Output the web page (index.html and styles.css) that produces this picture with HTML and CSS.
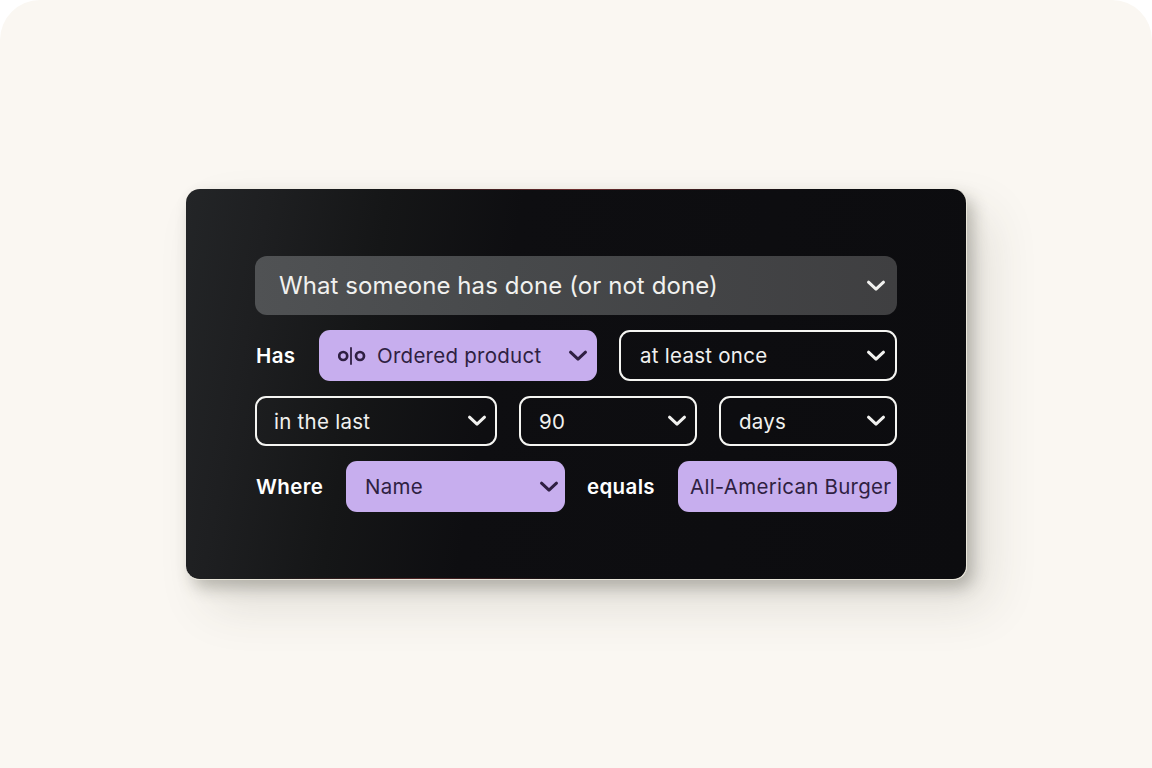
FILE: index.html
```html
<!DOCTYPE html>
<html lang="en">
<head>
    <meta charset="UTF-8">
    <title>Segment conditions</title>
    <link rel="stylesheet" href="styles.css">
</head>
<body>
    <svg class="icon-defs" width="0" height="0">
        <symbol id="chevron" viewBox="0 0 20 12">
            <path d="M2.5 2.2 L10 9.2 L17.5 2.2" fill="none" stroke="currentColor" stroke-width="3" stroke-linecap="round" stroke-linejoin="round"/>
        </symbol>
    </svg>

    <div class="stage">
        <div class="card">
            <div class="select select-wide">
                <span>What someone has done (or not done)</span>
                <svg class="chevron"><use href="#chevron"/></svg>
            </div>

            <div class="row">
                <span class="label label-has">Has</span>
                <div class="select select-purple select-product">
                    <!-- metric icon -->
                    <svg class="metric-icon" viewBox="0 0 28 18">
                        <circle cx="5.2" cy="9" r="4" fill="none" stroke="currentColor" stroke-width="2.7"/>
                        <path d="M13 1 V17" stroke="currentColor" stroke-width="1.8" stroke-linecap="round"/>
                        <circle cx="22" cy="9" r="4" fill="none" stroke="currentColor" stroke-width="2.7"/>
                    </svg>
                    <span>Ordered product</span>
                    <svg class="chevron"><use href="#chevron"/></svg>
                </div>
                <div class="select select-outline select-once">
                    <span>at least once</span>
                    <svg class="chevron"><use href="#chevron"/></svg>
                </div>
            </div>

            <div class="row row-short">
                <div class="select select-outline select-last">
                    <span>in the last</span>
                    <svg class="chevron"><use href="#chevron"/></svg>
                </div>
                <div class="select select-outline select-num">
                    <span>90</span>
                    <svg class="chevron"><use href="#chevron"/></svg>
                </div>
                <div class="select select-outline select-days">
                    <span>days</span>
                    <svg class="chevron"><use href="#chevron"/></svg>
                </div>
            </div>

            <div class="row">
                <span class="label label-where">Where</span>
                <div class="select select-purple select-name">
                    <span>Name</span>
                    <svg class="chevron"><use href="#chevron"/></svg>
                </div>
                <span class="label label-equals">equals</span>
                <div class="select select-purple select-value">
                    <span>All-American Burger</span>
                </div>
            </div>
        </div>
    </div>
</body>
</html>
```

FILE: styles.css
```css
* {
    margin: 0;
    padding: 0;
    box-sizing: border-box;
    font-family: 'Inter', 'Liberation Sans', sans-serif;
}

:root {
    --purple: #c7aeee;
    --purple-text: #2f1f42;
    --text-color: #f1f1ef;
}

body {
    background-color: #ffffff;
    width: 1152px;
    height: 768px;
    overflow: hidden;
}

.icon-defs {
    display: block;
}

.stage {
    height: 768px;
    padding: 189px 185px 0 186px;
    background-color: #faf7f2;
    border-radius: 40px 40px 0 0;
}

.card {
    height: 391px;
    padding: 67px 69px 0 69px;
    display: flex;
    flex-direction: column;
    gap: 15px;
    color: var(--text-color);
    border-radius: 14px;
    background:
        linear-gradient(90deg, rgba(120, 50, 50, 0) 25%, rgba(120, 50, 50, 0.9) 50%, rgba(120, 50, 50, 0) 80%) top / 100% 1px no-repeat,
        linear-gradient(90deg, rgba(120, 50, 50, 0) 10%, rgba(120, 50, 50, 0.6) 30%, rgba(120, 50, 50, 0) 50%) bottom / 100% 1px no-repeat,
        linear-gradient(100deg, #232527 0%, #1e1f21 10%, #151617 24%, #0e0e11 40%, #0c0c0f 100%);
    border-right: 1px solid #e9e6da;
    border-bottom: 1px solid #e9e6da;
    box-shadow: 6px 8px 16px rgba(60, 58, 48, 0.3), 22px 26px 50px rgba(60, 58, 48, 0.13);
}

.row {
    display: flex;
    align-items: center;
    height: 51px;
}

.row-short {
    height: 50px;
}

.row-short .select {
    height: 50px;
}

.label {
    font-size: 20.5px;
    font-weight: 600;
    letter-spacing: 0.35px;
    padding-left: 1px;
    color: #ffffff;
    flex-shrink: 0;
}

.label-has { width: 64px; }
.label-where { width: 91px; }
.label-equals { width: 92px; margin-left: 21px; }

.select {
    display: flex;
    align-items: center;
    flex-shrink: 0;
    height: 51px;
    font-size: 20.5px;
    letter-spacing: 0.26px;
    white-space: nowrap;
    border-radius: 11px;
}

.select .chevron {
    width: 20px;
    height: 12px;
    margin-left: auto;
}

.select-wide {
    height: 59px;
    padding: 0 11px 0 24px;
    font-size: 24px;
    letter-spacing: 0.08px;
    background: linear-gradient(90deg, #505254 0%, #47494b 40%, #3f3f41 100%);
    border-radius: 12px;
}

.select-purple {
    background-color: var(--purple);
    color: var(--purple-text);
}

.select-outline {
    border: 2px solid #f5f5f2;
    padding: 0 9px 0 18px;
}

.select-product {
    width: 278px;
    padding: 0 9px 0 19px;
}

.metric-icon {
    width: 28px;
    height: 18px;
    margin-right: 11px;
}

.select-once {
    width: 278px;
    margin-left: 22px;
    padding-left: 19px;
}

.select-last {
    width: 242px;
    padding: 0 8px 0 17px;
}

.select-num {
    width: 178px;
    margin: 0 22px;
    padding-right: 8px;
}

.select-days {
    width: 178px;
}

.select-name {
    width: 219px;
    padding: 0 6px 0 19px;
}

.select-value {
    width: 219px;
    padding-left: 12px;
}
```
